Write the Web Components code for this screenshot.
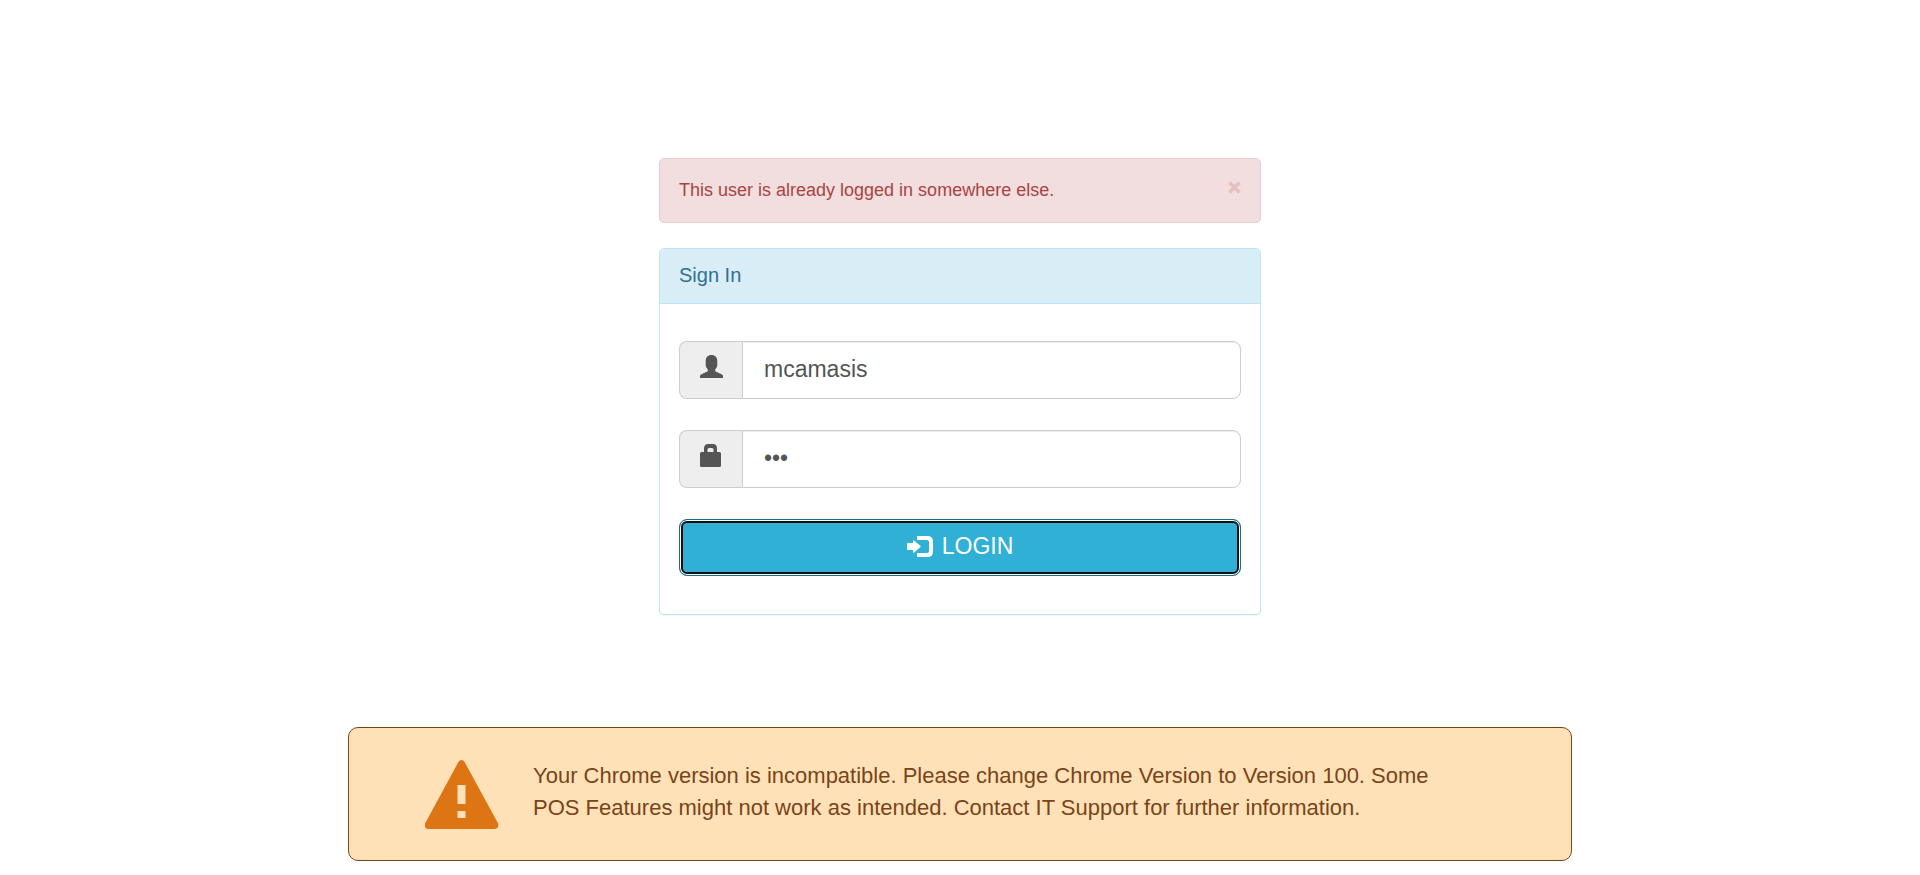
<!DOCTYPE html>
<html lang="en">
<head>
<meta charset="utf-8">
<meta name="viewport" content="width=device-width, initial-scale=1">
<title>Sign In</title>
<style>
body { margin: 0; background: #fff; font-family: "Liberation Sans", Arial, sans-serif; font-size: 18px; line-height: 25px; color: #333; }
</style>
</head>
<body>
<login-page>
  <alert-box>This user is already logged in somewhere else.</alert-box>
  <sign-in-panel heading="Sign In"></sign-in-panel>
  <version-warning slot="footer">Your Chrome version is incompatible. Please change Chrome Version to Version 100. Some POS Features might not work as intended. Contact IT Support for further information.</version-warning>
</login-page>
<script>
class BaseElement extends HTMLElement {
  constructor() {
    super();
    this.attachShadow({ mode: "open" }).innerHTML = this.render();
  }
}

customElements.define("login-page", class extends BaseElement {
  render() {
    return `<style>
      :host { display: block; padding: 158px 24px 12px; }
      main { display: flex; flex-direction: column; gap: 25px; max-width: 602px; margin: 0 auto 112px; }
      footer { max-width: 1224px; margin: 0 auto; }
    </style>
    <main><slot></slot></main>
    <footer><slot name="footer"></slot></footer>`;
  }
});

customElements.define("alert-box", class extends BaseElement {
  render() {
    return `<style>
      :host { display: block; }
      div { display: flex; justify-content: space-between; align-items: flex-start; box-sizing: border-box; min-height: 65px; padding: 19px; border: 1px solid #ebccd1; border-radius: 5px; background: #f2dede; color: #a94442; }
      button { border: 0; padding: 3px 0; margin: 0; background: none; cursor: pointer; display: flex; color: #e6bfbf; }
      svg { width: 13px; height: 13px; }
    </style>
    <div role="alert"><span><slot></slot></span>
      <button type="button" aria-label="Close"><svg viewBox="0 0 13 13"><path d="M1.500 1.500l10 10M11.500 1.500l-10 10" stroke="currentColor" stroke-width="3.600"/></svg></button>
    </div>`;
  }
});

customElements.define("field-group", class extends BaseElement {
  render() {
    const icons = {
      user: `<path d="M11.500 0C15.300 0 17.300 2.500 17.300 6V9.500C17.300 11.500 16.600 13 15.200 14.500V16.200L22 19.400Q23 20 23 21V23H0V21Q0 20 1 19.400L7.800 16.200V14.500C6.400 13 5.700 11.500 5.700 9.500V6C5.700 2.500 7.700 0 11.500 0z"/>`,
      lock: `<path fill-rule="evenodd" d="M4 8V4.500Q4 0 8 0h5Q17 0 17 4.500V8h2.500Q21 8 21 9.500v12q0 1.500-1.500 1.500h-18Q0 23 0 21.500v-12Q0 8 1.500 8zM7.500 8h6V5.500Q13.500 4 12 4H9Q7.500 4 7.500 5.500z"/>`
    };
    const type = this.getAttribute("type");
    return `<style>
      :host { display: block; }
      .group { display: flex; box-sizing: border-box; height: 58px; }
      label { display: flex; align-items: center; box-sizing: border-box; width: 63px; flex: none; padding: 0 0 7px 20px; border: 1px solid #ccc; border-right: 0; border-radius: 8px 0 0 8px; background: #eee; color: #555; }
      svg { width: 24px; height: 23px; fill: currentColor; }
      input { flex: 1; min-width: 0; box-sizing: border-box; margin: 0; padding: 0 21px 2px; border: 1px solid #ccc; border-radius: 0 8px 8px 0; background: #fff; box-shadow: inset 0 1px 1px rgba(0,0,0,.075); font: 23px "Liberation Sans", Arial, sans-serif; color: #555; outline: 0; }
    </style>
    <div class="group">
      <label for="field" aria-label="${this.getAttribute("label")}"><svg viewBox="0 0 24 23" aria-hidden="true">${icons[this.getAttribute("icon")]}</svg></label>
      <input id="field" type="${type}" value="${this.getAttribute("value")}">
    </div>`;
  }
});

customElements.define("login-button", class extends BaseElement {
  render() {
    return `<style>
      :host { display: block; }
      button { display: flex; align-items: center; justify-content: center; gap: 8px; box-sizing: border-box; width: 100%; height: 57px; margin: 0; padding: 0 0 3px; border: 1px solid #1b6d85; border-radius: 8px; background: #31b0d5; box-shadow: inset 0 0 0 1px #fff, inset 0 0 0 3px #101010; font: 23px "Liberation Sans", Arial, sans-serif; color: #fff; cursor: pointer; }
      svg { width: 27px; height: 21px; fill: currentColor; }
    </style>
    <button type="submit">
      <svg viewBox="0 0 27 21" aria-hidden="true"><path d="M1 7H6V5Q6 3.800 7.200 4.700L13.400 9.700Q14.200 10.400 13.400 11.100L7.200 16.400Q6 17.300 6 16V14H1Q0 14 0 13V8Q0 7 1 7zM10 0H20.500Q26 0 26 5.500V15.500Q26 21 20.500 21H10V17H20Q22 17 22 15V6Q22 4 20 4H10z"/></svg>
      <span><slot></slot></span>
    </button>`;
  }
});

customElements.define("sign-in-panel", class extends BaseElement {
  render() {
    return `<style>
      :host { display: block; }
      section { border: 1px solid #bce8f1; border-radius: 5px; background: #fff; box-shadow: 0 1px 1px rgba(0,0,0,.05); }
      h1 { margin: 0; padding: 14px 19px 15px; border-bottom: 1px solid #bce8f1; border-radius: 4px 4px 0 0; background: #d9edf7; color: #31708f; font-size: 20px; line-height: 25px; font-weight: 400; }
      form { display: flex; flex-direction: column; gap: 31px; padding: 37px 19px 38px; }
    </style>
    <section>
      <h1>${this.getAttribute("heading")}</h1>
      <form onsubmit="return false">
        <field-group icon="user" type="text" label="Username" value="mcamasis"></field-group>
        <field-group icon="lock" type="password" label="Password" value="123"></field-group>
        <login-button>LOGIN</login-button>
      </form>
    </section>`;
  }
});

customElements.define("version-warning", class extends BaseElement {
  render() {
    return `<style>
      :host { display: block; }
      div { display: flex; align-items: flex-start; gap: 34px; padding: 32px 120px 31px 76px; border: 1px solid #7a4419; border-radius: 10px; background: #ffe1b8; color: #7a4419; }
      svg { flex: none; width: 74px; height: 69px; }
      p { margin: 0; font-size: 22px; line-height: 32px; }
    </style>
    <div role="alert">
      <svg viewBox="0 0 74 69" aria-hidden="true"><path fill="#dd7515" fill-rule="evenodd" d="M33.500 1.800Q34.700 0 36.500 0t3 1.800L73 63.300q.6 2-.1 3.900-1 1.800-3.200 1.800H3.300q-2.200 0-3.200-1.800-.6-1.900.1-3.900zM32.500 25v19h8V25zm0 26v7h8v-7z"/></svg>
      <p><slot></slot></p>
    </div>`;
  }
});
</script>
</body>
</html>
